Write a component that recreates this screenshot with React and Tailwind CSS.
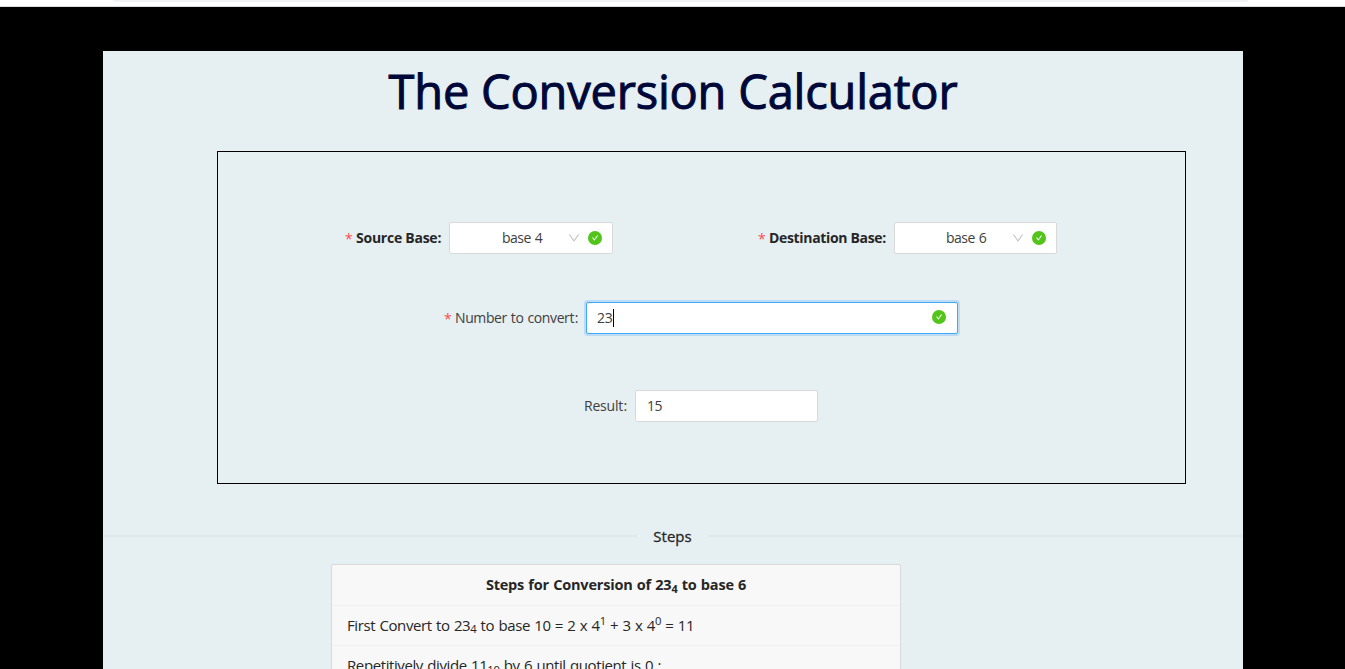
import React from 'react';

function Check({ className = '' }) {
  return (
    <svg viewBox="64 64 896 896" className={`h-3.5 w-3.5 shrink-0 ${className}`}>
      <circle cx="512" cy="512" r="448" fill="#52c41a" />
      <path fill="#fff" d="M699 353h-46.900c-10.200 0-19.900 4.900-25.900 13.300L469 584.300l-71.200-98.800c-6-8.300-15.600-13.300-25.900-13.300H325c-6.500 0-10.300 7.400-6.500 12.700l124.600 172.800a31.800 31.800 0 0 0 51.700 0l210.600-292c3.900-5.300.1-12.700-6.400-12.700z" />
    </svg>
  );
}

function Arrow() {
  return (
    <svg viewBox="64 64 896 896" className="h-3 w-3 shrink-0 fill-[#bfbfbf]">
      <path d="M884 256h-75c-5.100 0-9.900 2.500-12.900 6.600L512 654.200 227.900 262.600c-3-4.100-7.800-6.600-12.900-6.600h-75c-6.500 0-10.300 7.400-6.500 12.700l352.600 486.100c12.800 17.600 39 17.600 51.700 0l352.600-486.100c3.900-5.300.1-12.700-6.400-12.700z" />
    </svg>
  );
}

function Label({ children, required, className = '' }) {
  return (
    <div className={`flex shrink-0 items-center pr-[8px] ${className}`}>
      {required && <span className="w-[11px] shrink-0 pt-px font-normal text-[#ff4d4f]">*</span>}
      <span>{children}</span>
      <span className="ml-auto pb-px">:</span>
    </div>
  );
}

function Select({ children, className = '' }) {
  return (
    <div className={`flex h-8 shrink-0 items-center rounded-[2px] border border-[#d9d9d9] bg-white ${className}`}>
      <span className="w-[66px] tracking-[-0.5px] text-[#404040] [word-spacing:0.8px]">{children}</span>
      <Arrow />
      <Check className="ml-[8px]" />
    </div>
  );
}

export default function App() {
  return (
    <div className="flex h-[669px] w-[1345px] flex-col overflow-hidden bg-black font-['Open_Sans','Noto_Sans',sans-serif] text-[#262626]">
      <div className="h-[7px] shrink-0 border-b border-[#dadce0] bg-white">
        <div className="ml-[113px] h-[2px] w-[1135px] rounded-b-full bg-[#f1f3f4]" />
      </div>
      <main className="mt-[44px] ml-[103px] h-[618px] w-[1140px] shrink-0 overflow-hidden bg-[#e6eff2]">
        <h1 className="flex h-[100px] justify-center pt-[5px] text-[47px] leading-[70px] font-medium tracking-[-0.2px] whitespace-nowrap text-[#000839] [-webkit-text-stroke:1px_#000839]">
          The Conversion Calculator
        </h1>
        <section className="ml-[114px] h-[333px] w-[969px] border border-black pt-[70px] text-[14px] leading-[22px] whitespace-nowrap">
          <div className="flex h-8 items-center">
            <Label required className="ml-[127px] w-[104px] font-bold tracking-[-0.25px]">Source Base</Label>
            <Select className="w-[164px] pl-[52px]">base 4</Select>
            <Label required className="ml-[145px] w-[136px] font-bold tracking-[-0.33px]">Destination Base</Label>
            <Select className="w-[163px] pl-[51px]">base 6</Select>
          </div>
          <div className="mt-[48px] flex h-8 items-center text-[#404040]">
            <Label required className="ml-[226px] w-[142px] tracking-[-0.4px] [word-spacing:0.8px]">Number to convert</Label>
            <div className="flex h-8 w-[372px] items-center rounded-[2px] border border-[#40a9ff] bg-white pr-[11px] pl-[10px] shadow-[0_0_0_2px_rgba(24,144,255,0.2)]">
              <span className="tracking-[-0.2px]">23</span>
              <span className="h-[18px] w-px bg-black" />
              <Check className="mb-[2px] ml-auto" />
            </div>
          </div>
          <div className="mt-[56px] flex h-8 items-center text-[#404040]">
            <Label className="ml-[366px] w-[51px] tracking-[-0.2px]">Result</Label>
            <div className="flex h-8 w-[183px] items-center rounded-[2px] border border-[#d9d9d9] bg-white pl-[11px]">
              <span className="tracking-[-0.6px]">15</span>
            </div>
          </div>
        </section>
        <div className="mt-[40px] flex h-6 items-center text-[15px] leading-6">
          <span className="h-[2px] w-[534px] bg-[#e0e8eb]" />
          <span className="w-[71px] text-center font-medium [-webkit-text-stroke:0.3px_#262626]">Steps</span>
          <span className="h-[2px] flex-1 bg-[#e0e8eb]" />
        </div>
        <section className="mt-[16px] ml-[228px] h-[160px] w-[570px] rounded-[2px] border border-[#d9d9d9] bg-[#f8f8f8] text-[15px] leading-6 whitespace-nowrap">
          <div className="flex h-[41px] items-center justify-center border-b border-[#f0f0f0] font-bold">
            <p className="text-[14.5px] tracking-[-0.2px] [word-spacing:0.7px]">Steps for Conversion of 23<sub>4</sub> to base 6</p>
          </div>
          <div className="flex h-[40px] items-center border-b border-[#f0f0f0] pb-[2px] pl-[15px]">
            <p className="tracking-[-0.4px] [word-spacing:0.8px]">First Convert to 23<sub>4</sub> to base 10 = 2 x 4<sup>1</sup> + 3 x 4<sup>0</sup> = 11</p>
          </div>
          <div className="flex h-[40px] items-center pb-[2px] pl-[15px]">
            <p className="tracking-[-0.4px] [word-spacing:0.8px]">Repetitively divide 11<sub>10</sub> by 6 until quotient is 0 :</p>
          </div>
        </section>
      </main>
    </div>
  );
}
